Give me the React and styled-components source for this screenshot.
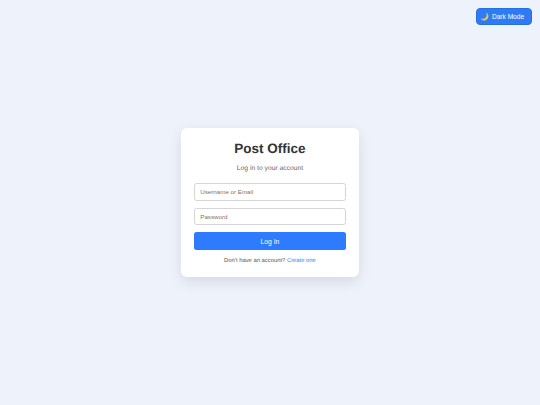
import React from "react";
import styled, { createGlobalStyle } from "styled-components";

const GlobalStyle = createGlobalStyle`
  html, body {
    margin: 0;
    padding: 0;
    height: 100%;
  }
  body {
    background: #eef2fb;
    font-family: "Liberation Sans", Arial, sans-serif;
    text-rendering: geometricPrecision;
  }
  #root {
    height: 100%;
  }
`;

function MoonIcon() {
  return (
    <svg width="9" height="9" viewBox="0 0 12 12">
      <path
        d="M8.2 0.6C9.6 3.6 8.9 6.6 6.6 8.2C4.8 9.4 2.6 9.3 0.8 8.2C2 10.4 4.4 11.6 6.8 11.2C9.6 10.7 11.4 8.2 11.2 5.4C11.1 3.4 9.9 1.5 8.2 0.6Z"
        fill="#f2c14e"
      />
    </svg>
  );
}

export default function App() {
  return (
    <>
      <GlobalStyle />
      <Page>
        <ThemeToggle>
          <MoonIcon />
          Dark Mode
        </ThemeToggle>
        <Card>
          <Title>Post Office</Title>
          <Subtitle>Log in to your account</Subtitle>
          <Form>
            <Input placeholder="Username or Email" />
            <Input type="password" placeholder="Password" />
            <Submit type="button">Log In</Submit>
          </Form>
          <Footer>
            Don't have an account? <a href="#create">Create one</a>
          </Footer>
        </Card>
      </Page>
    </>
  );
}

const Page = styled.div`
  height: 405px;
  display: flex;
  align-items: center;
  justify-content: center;
  overflow: hidden;
`;

const ThemeToggle = styled.button`
  position: absolute;
  top: 8px;
  right: 8px;
  width: 56.5px;
  height: 17px;
  padding: 0 3px 0 0;
  display: flex;
  align-items: center;
  justify-content: center;
  gap: 2.5px;
  background: #2f7bf6;
  border: 1px solid #2a6fe0;
  border-radius: 4px;
  color: #fff;
  font-family: inherit;
  font-size: 6.6px;
`;

const Card = styled.div`
  width: 177.4px;
  height: 149px;
  box-sizing: border-box;
  padding: 11.75px 13px 0;
  background: #fff;
  border-radius: 6px;
  box-shadow: 0 4.5px 14px rgba(0, 0, 0, 0.1);
  display: flex;
  flex-direction: column;
`;

const Title = styled.h1`
  margin: 0;
  font-size: 13.5px;
  line-height: 18px;
  font-weight: 700;
  text-align: center;
  color: #333;
`;

const Subtitle = styled.p`
  margin: 6.5px 0 0;
  font-size: 6.75px;
  line-height: 10px;
  text-align: center;
  color: #666;
`;

const Form = styled.form`
  margin-top: 8.5px;
  display: flex;
  flex-direction: column;
  gap: 7px;
`;

const Input = styled.input`
  height: 15.8px;
  box-sizing: content-box;
  padding: 0 5px;
  background: #fff;
  border: 0.75px solid #d5d5d5;
  border-radius: 2.5px;
  font-family: inherit;
  font-size: 6.2px;
  outline: none;

  &::placeholder {
    color: #757575;
    opacity: 1;
  }
`;

const Submit = styled.button`
  height: 17.5px;
  padding: 0;
  background: #2f7bff;
  border: none;
  border-radius: 2.5px;
  color: #fff;
  font-family: inherit;
  font-size: 6.75px;
`;

const Footer = styled.p`
  margin: 7px 0 0;
  font-size: 5.85px;
  line-height: 8px;
  text-align: center;
  color: #555;

  a {
    color: #2f7bf6;
    text-decoration: none;
  }
`;
